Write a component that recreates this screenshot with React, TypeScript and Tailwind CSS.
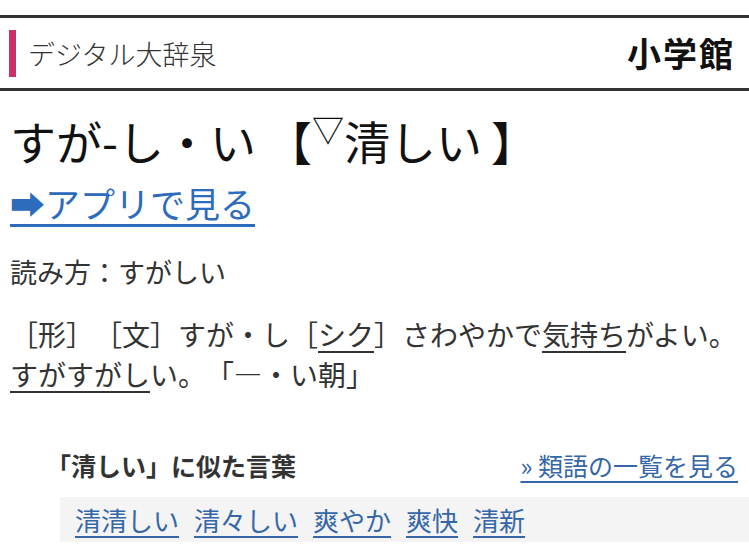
import React from "react";

const font = { fontFamily: '"Noto Sans CJK JP", "Noto Sans", sans-serif' };

export default function App() {
  const similar = ["清清しい", "清々しい", "爽やか", "爽快", "清新"];
  return (
    <div
      className="w-[749px] h-[549px] overflow-hidden bg-white text-[#222] [text-spacing-trim:space-all]"
      style={font}
    >
      <div className="pt-[15px]">
        <div className="flex items-center justify-between border-y-[3px] border-[#333] h-[76px] pl-[9px] pr-[14px]">
          <div className="flex items-center">
            <div className="w-[7px] h-[47px] bg-[#c8306a]" />
            <span className="ml-[12px] text-[27px] font-light text-[#333] leading-none">デジタル大辞泉</span>
          </div>
          <span className="text-[34px] font-bold text-[#111] leading-none tracking-[2px]">小学館</span>
        </div>
      </div>

      <div className="px-[10px]">
        <h1 className="mt-[19px] text-[46px] leading-[60px] font-normal text-[#111] whitespace-nowrap">
          すが-し・い<span className="ml-[10px]">【</span>
          <span className="inline-block align-top text-[32px] leading-[36px]">▽</span>清しい
          <span className="ml-[9px]">】</span>
        </h1>
        <a className="block mt-[11px] text-[35px] leading-[44px] text-[#2d6bbd] underline decoration-[3px] underline-offset-[6px]">
          ➡アプリで見る
        </a>
        <p className="mt-[31px] text-[27px] leading-[32px] text-[#333]">読み方：すがしい</p>
        <p className="mt-[26px] text-[28px] leading-[40px] text-[#333]">
          ［形］［文］すが・し［<span className="underline decoration-2 underline-offset-[5px]">シク</span>］さわやかで
          <span className="underline decoration-2 underline-offset-[5px]">気持ち</span>がよい。
          <br />
          <span className="underline decoration-2 underline-offset-[5px]">すがすがし</span>い。「―・い朝」
        </p>
      </div>

      <div className="mt-[56px] pl-[46px] pr-[11px]">
        <div className="flex items-center justify-between">
          <span className="text-[25px] font-bold text-[#333] leading-[30px]">「清しい」に似た言葉</span>
          <a className="text-[25px] text-[#3567a8] underline decoration-2 underline-offset-[5px] leading-[30px]">
            » 類語の一覧を見る
          </a>
        </div>
        <div className="mt-[17px] ml-[14px] -mr-[11px] bg-[#f4f4f4] h-[45px] flex items-center gap-[15px] pl-[15px]">
          {similar.map((w) => (
            <a
              key={w}
              className="text-[26px] text-[#3567a8] underline decoration-2 underline-offset-[5px] leading-none"
            >
              {w}
            </a>
          ))}
        </div>
      </div>
    </div>
  );
}
